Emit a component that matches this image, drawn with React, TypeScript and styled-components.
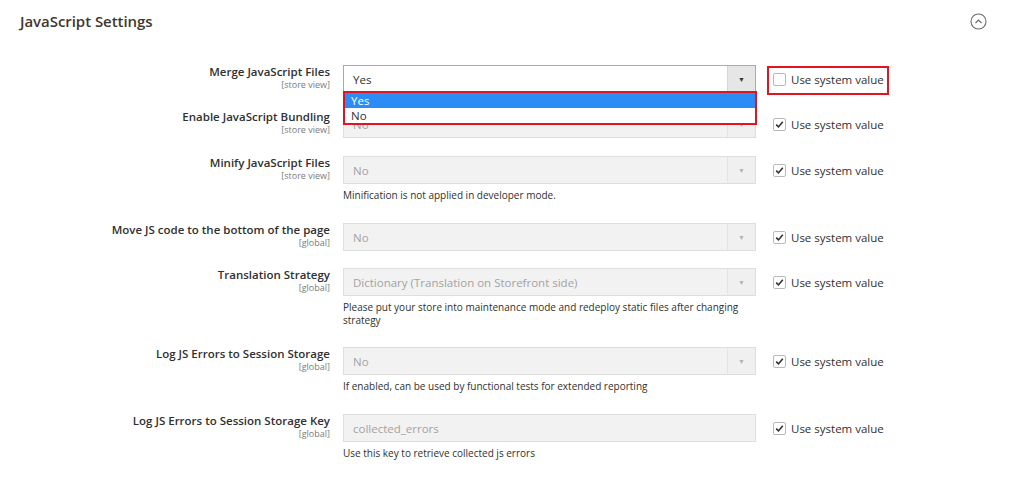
import React from "react";
import styled, { createGlobalStyle } from "styled-components";

const Global = createGlobalStyle`
  html, body { margin: 0; padding: 0; background: #fff; }
  body { font-family: "Open Sans", "Noto Sans", sans-serif; color: #303030; }
`;

const Page = styled.div`
  width: 1016px;
  height: 479px;
  overflow: hidden;
  position: relative;
`;

const Header = styled.div`
  display: flex;
  align-items: center;
  justify-content: space-between;
  height: 42px;
  padding: 0 29px 0 20px;
`;

const Title = styled.h2`
  margin: 0;
  font-size: 15px;
  font-weight: 600;
  color: #41362f;
  letter-spacing: -0.05px;
`;

const Rows = styled.div`
  display: flex;
  flex-direction: column;
  padding-top: 23px;
`;

const Row = styled.div<{ $gap: number }>`
  display: flex;
  align-items: flex-start;
  margin-bottom: ${(p) => p.$gap}px;
`;

const LabelCell = styled.div`
  width: 330px;
  text-align: right;
  padding-top: 0px;
`;

const LabelText = styled.div`
  font-size: 11.5px;
  font-weight: 600;
  line-height: 14px;
  color: #303030;
`;

const Scope = styled.div`
  font-size: 9px;
  line-height: 11px;
  color: #7a7a7a;
`;

const ControlCell = styled.div`
  width: 413px;
  margin-left: 13px;
  position: relative;
`;

const SelectBox = styled.div<{ $active?: boolean }>`
  height: 28px;
  box-sizing: border-box;
  display: flex;
  align-items: stretch;
  border: 1px solid ${(p) => (p.$active ? "#8fb0d4" : "#dedede")};
  background: ${(p) => (p.$active ? "#fff" : "#f2f2f2")};
`;

const SelectValue = styled.div<{ $active?: boolean }>`
  flex: 1;
  display: flex;
  align-items: center;
  padding-left: 9px;
  font-size: 11.5px;
  color: ${(p) => (p.$active ? "#303030" : "#a3a3a3")};
`;

const ArrowBox = styled.div<{ $active?: boolean }>`
  width: 27px;
  display: flex;
  align-items: center;
  justify-content: center;
  border-left: 1px solid ${(p) => (p.$active ? "#d6d6d6" : "#e4e4e4")};
  background: ${(p) => (p.$active ? "#e6e6e6" : "#f0f0f0")};
  color: ${(p) => (p.$active ? "#41362f" : "#b5b5b5")};
  font-size: 7px;
`;

const Note = styled.div`
  font-size: 10px;
  line-height: 13px;
  height: auto;
  color: #303030;
  margin: 5px 0 0;
  padding-right: 10px;
`;

const UseCell = styled.label`
  margin-left: 17px;
  height: 28px;
  display: flex;
  align-items: center;
  gap: 5px;
  font-size: 11.5px;
  color: #303030;
  position: relative;
`;

const Box = styled.span`
  width: 13px;
  height: 13px;
  box-sizing: border-box;
  border: 1px solid #b9b9b9;
  border-radius: 2px;
  background: #fff;
  display: flex;
  align-items: center;
  justify-content: center;
`;

const Highlight = styled.div`
  position: absolute;
  left: -6px;
  top: 1px;
  right: -5px;
  bottom: -2px;
  border: 2px solid #e2141f;
  pointer-events: none;
`;

const DropList = styled.div`
  position: absolute;
  left: 0;
  top: 26px;
  width: 414px;
  box-sizing: border-box;
  border: 2px solid #e2141f;
  background: #fff;
  z-index: 2;
`;

const DropItem = styled.div<{ $selected?: boolean }>`
  height: 15px;
  line-height: 15px;
  padding-left: 6px;
  font-size: 11.5px;
  background: ${(p) => (p.$selected ? "#2b8cf6" : "#fff")};
  color: ${(p) => (p.$selected ? "#fff" : "#303030")};
`;

const CollapseIcon = () => (
  <svg width="17" height="17" viewBox="0 0 17 17">
    <circle cx="8.5" cy="8.5" r="7.5" fill="none" stroke="#6b6b6b" strokeWidth="1.1" />
    <path d="M5.5 10 L8.5 7 L11.5 10" fill="none" stroke="#6b6b6b" strokeWidth="1.2" />
  </svg>
);

const Check = () => (
  <svg width="9" height="9" viewBox="0 0 9 9">
    <path d="M1.2 4.6 L3.5 6.9 L7.8 1.8" fill="none" stroke="#303030" strokeWidth="1.6" />
  </svg>
);

type RowDef = {
  label: string;
  scope: string;
  value: string;
  select?: boolean;
  active?: boolean;
  note?: string;
  gap: number;
};

const rows: RowDef[] = [
  { label: "Merge JavaScript Files", scope: "[store view]", value: "Yes", select: true, active: true, gap: 17 },
  { label: "Enable JavaScript Bundling", scope: "[store view]", value: "No", select: true, gap: 18 },
  { label: "Minify JavaScript Files", scope: "[store view]", value: "No", select: true, note: "Minification is not applied in developer mode.", gap: 21 },
  { label: "Move JS code to the bottom of the page", scope: "[global]", value: "No", select: true, gap: 17 },
  {
    label: "Translation Strategy",
    scope: "[global]",
    value: "Dictionary (Translation on Storefront side)",
    select: true,
    note: "Please put your store into maintenance mode and redeploy static files after changing strategy",
    gap: 20,
  },
  { label: "Log JS Errors to Session Storage", scope: "[global]", value: "No", select: true, note: "If enabled, can be used by functional tests for extended reporting", gap: 21 },
  { label: "Log JS Errors to Session Storage Key", scope: "[global]", value: "collected_errors", note: "Use this key to retrieve collected js errors", gap: 0 },
];

export default function App() {
  return (
    <Page>
      <Global />
      <Header>
        <Title>JavaScript Settings</Title>
        <CollapseIcon />
      </Header>
      <Rows>
        {rows.map((r, i) => (
          <Row key={i} $gap={r.gap}>
            <LabelCell>
              <LabelText>{r.label}</LabelText>
              <Scope>{r.scope}</Scope>
            </LabelCell>
            <ControlCell>
              <SelectBox $active={r.active}>
                <SelectValue $active={r.active}>{r.value}</SelectValue>
                {r.select && <ArrowBox $active={r.active}>▼</ArrowBox>}
              </SelectBox>
              {r.active && (
                <DropList>
                  <DropItem $selected>Yes</DropItem>
                  <DropItem>No</DropItem>
                </DropList>
              )}
              {r.note && <Note>{r.note}</Note>}
            </ControlCell>
            <UseCell>
              <Box>{!r.active && <Check />}</Box>
              Use system value
              {r.active && <Highlight />}
            </UseCell>
          </Row>
        ))}
      </Rows>
    </Page>
  );
}
